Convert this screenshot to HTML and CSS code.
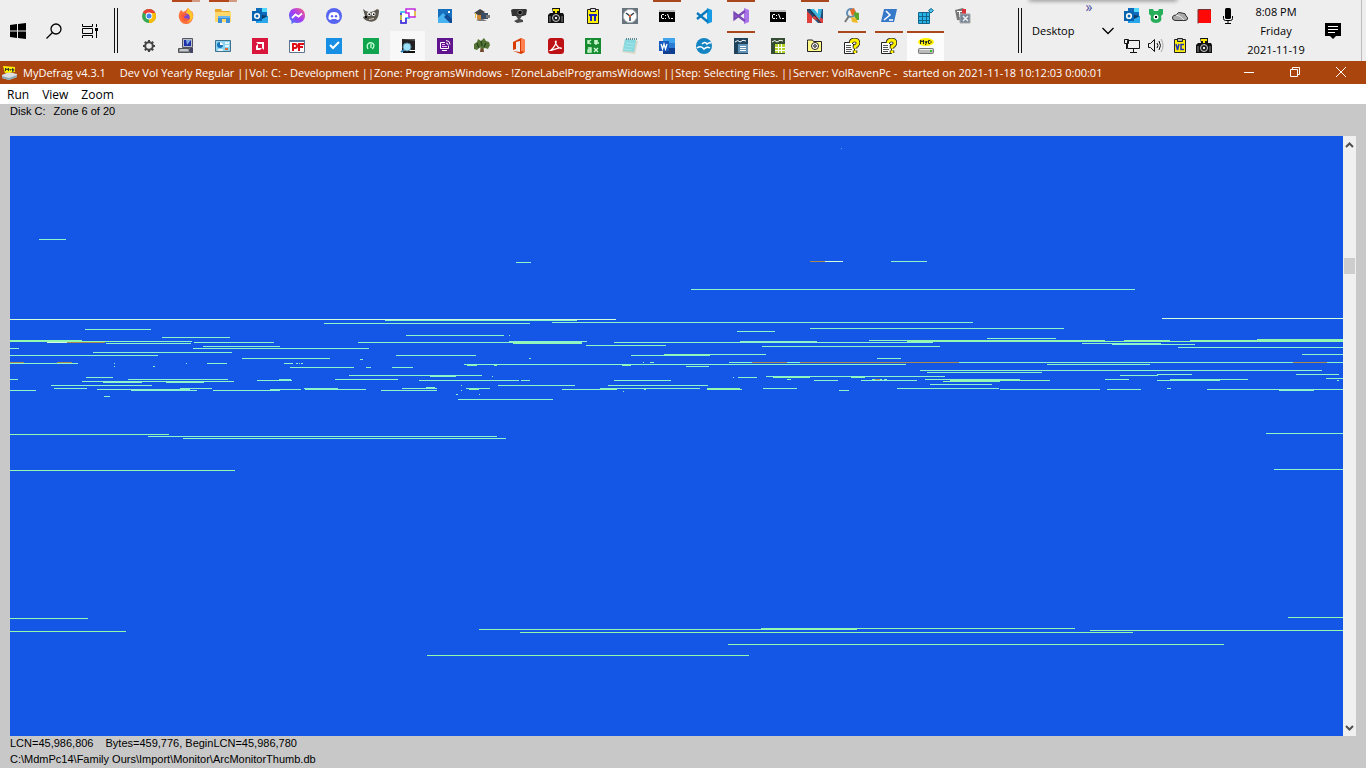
FILE: index.html
```html
<!DOCTYPE html>
<html lang="en">
<head>
<meta charset="utf-8">
<title>MyDefrag v4.3.1</title>
<link rel="stylesheet" href="styles.css">
</head>
<body>
<svg class="defs" aria-hidden="true">
  <symbol id="cmd" viewBox="0 0 16 16"><path fill="#000" d="M0 2h16v12H0z"/><path fill="#bdbdbd" d="M0 2h16v2H0z"/><path fill="none" stroke="#fff" d="M5 6.500H3L2.500 7v3l.5.500h2M6.500 7v1m0 2v1M8.500 6l2 5M12 10.500h2"/></symbol>
  <symbol id="help" viewBox="0 0 16 16"><path fill="#fff" stroke="#222" d="M.5 4.500h7l3 3v8H.5z"/><path stroke="#555" d="M2 7.500h5M2 9.500h5M2 11.500h6M2 13.500h5"/><path fill="none" stroke="#222" stroke-width="4.500" d="M7 5Q7 2 10.500 2T14 5q0 2-3 3.500v2m0 2V15"/><path fill="none" stroke="#fff200" stroke-width="2.800" d="M7 5Q7 2 10.500 2T14 5q0 2-3 3.500v2m0 2V15"/></symbol>
  <symbol id="camera" viewBox="0 0 16 16"><path fill="#111" d="M4 0h8v5h3l1 2v8H0V7l2-2h3z"/><path fill="#ffe900" d="M5 1h6v2H5zM7 3h2v2H7z"/><circle cx="8" cy="10" r="3.500" fill="#222" stroke="#ccc"/><path fill="#eee" d="M7 9h2v2H7z"/><path stroke="#888" d="M2 8v6M14 8v6"/></symbol>
  <symbol id="outlook" viewBox="0 0 16 16"><path fill="#28a8ea" d="M4 0h11v7H4z"/><path fill="#0f6cbd" d="M4 0h6v4H4zM10 4h5v4h-5z"/><path fill="#50d9ff" d="M10 0h5v4h-5z"/><path fill="#1490df" d="M4 8h12v7H4z"/><path fill="#123b6d" d="m4 8 6 4 6-4-6-1z"/><path fill="#28a8ea" d="m4 15 6-4 6-3v7z"/><path fill="#0864b1" d="M0 3h10v10H0z"/><circle cx="5" cy="8" r="2.300" fill="none" stroke="#fff" stroke-width="1.600"/></symbol>
</svg>

<header class="taskbar">
  <nav class="system" aria-label="System">
    <button class="sys" aria-label="Start"><svg viewBox="0 0 16 16"><path d="m0 2 7-1v6.500H0zm8-1 8-1v7.500H8zM0 8.500h7V15l-7-1zm8 0h8V16l-8-1z"/></svg></button>
    <button class="sys" aria-label="Search"><svg viewBox="0 0 16 16"><g fill="none" stroke="#000" stroke-width="1.300"><circle cx="10" cy="6" r="5"/><path d="m6.500 9.500-6 6"/></g></svg></button>
    <button class="sys" aria-label="Task View"><svg viewBox="0 0 16 16"><path fill="none" stroke="#000" d="M.5 1v2.500h10V1M.5 15v-2.500h10V15M.5 5.500h10v5H.5zM14.500 1v3m0 4v7"/><path d="M13 5h3v3h-3z"/></svg></button>
  </nav>
  <span class="grip"></span>
  <nav class="apps" aria-label="Applications">
    <button class="app" aria-label="Chrome"><svg viewBox="0 0 16 16"><circle cx="8" cy="8" r="7" fill="#34a853"/><path fill="#ea4335" d="M8 8 1.800 4.600A7 7 0 0 1 14.300 5z"/><path fill="#fbbc05" d="M8 8h7a7 7 0 0 1-7 7z"/><path fill="#fbbc05" d="M9 5h5.400A7 7 0 0 1 8 15l3-5z"/><circle cx="8" cy="8" r="3.400" fill="#fff"/><circle cx="8" cy="8" r="2.500" fill="#4285f4"/></svg></button>
    <button class="app open multi" aria-label="Firefox"><svg viewBox="0 0 16 16"><path fill="#ff7139" d="M10 0q2 2 3 4l1-1q2 4 1 7-2 6-7 6T1 10Q0 6 3 2l2 2q3-1 5-4z"/><path fill="#ffca28" d="M10 0q5 4 5 9-2 5-6 5 4-2 3-5-1-3-4-4z"/><circle cx="8" cy="9" r="3.600" fill="#7549d4"/><path fill="#ff5a36" d="M3 7q4-2 7 0-4 0-4 3l5 1q-4 4-7 0z"/></svg></button>
    <button class="app open multi" aria-label="File Explorer"><svg viewBox="0 0 16 16"><path fill="#e8a92d" d="M0 1h6l1 2h8v4H0z"/><path fill="#ffd76a" d="M0 4h16v10H0z"/><path fill="#3a8fd9" d="M3 8h12v7h-4v-4H7v4H3z"/><path fill="#69b5ef" d="M3 8h12v2H3z"/></svg></button>
    <button class="app" aria-label="Outlook"><svg><use href="#outlook"/></svg></button>
    <button class="app" aria-label="Messenger"><svg viewBox="0 0 16 16"><defs><linearGradient id="ms" x2="1" y1="1" y2="0"><stop stop-color="#2f7dff"/><stop offset=".5" stop-color="#a43cf5"/><stop offset="1" stop-color="#ff6478"/></linearGradient></defs><path fill="url(#ms)" d="M8 0c5 0 8 3 8 7.500S13 15 8 15l-3-.4L2.500 16v-3Q0 11 0 7.500C0 3 3 0 8 0z"/><path fill="none" stroke="#fff" stroke-width="1.800" d="m3 10 3.500-3.500 3 2L13 5.500"/></svg></button>
    <button class="app" aria-label="Discord"><svg viewBox="0 0 16 16"><circle cx="8" cy="8" r="8" fill="#5865f2"/><path fill="#fff" d="M4 5q4-2 8 0 2 3 1.500 6-2 1.500-3 .5L10 11H6l-.5 .5q-1 1-3-.5Q2 8 4 5z"/><circle cx="6" cy="8.300" r="1.200" fill="#5865f2"/><circle cx="10" cy="8.300" r="1.200" fill="#5865f2"/></svg></button>
    <button class="app" aria-label="GIMP"><svg viewBox="0 0 16 16"><path fill="#5d584f" d="M0 1q3 3 6 3 5 0 8-3l2 1q0 7-3 10-4 3-8 1-4-1-5-4l2-1z"/><circle cx="6" cy="6" r="1.900" fill="#fff"/><circle cx="10.500" cy="6" r="2" fill="#fff"/><path d="M5.500 5.500H7V7H5.500zM10 5.500h1.500V7H10zM2 8h2v2H2z"/><path stroke="#d9d4c8" d="m6 11.500 5-1"/></svg></button>
    <button class="app" aria-label="Layout tool"><svg viewBox="0 0 16 16"><path fill="#fff" stroke="#16b8ee" stroke-width="1.500" d="M1 4h8v6H6v5H1z"/><path fill="#fff" stroke="#c128e0" stroke-width="1.500" d="M6 1h9v8H9V5H6z"/><path fill="none" stroke="#5a20d8" stroke-width="1.500" d="M1 5v10h5v-5"/><path stroke="#e7dd20" stroke-width="1.500" d="M15 3v5M1 7v5"/></svg></button>
    <button class="app" aria-label="Photos"><svg viewBox="0 0 16 16"><path fill="#1670bd" d="M1 1h14v14H1z"/><path fill="#49b3f2" d="m1 10 5-5 9 9v1H1z"/><path fill="#104b96" d="m7 9 3-3 5 5v4h-2z"/><path fill="#fff" d="M11 3h2v2h-2z"/></svg></button>
    <button class="app" aria-label="Training"><svg viewBox="0 0 16 16"><path fill="#444" d="m0 5 6-4 5 3-5 4z"/><path fill="#d18a32" d="M3 7h5v5H3z"/><path fill="#3b4d66" d="M7 5h7v6H7z"/><path fill="#777" d="M12 7h4v3h-4zM2 12l7-1 4 2H5z"/><path stroke="#e8c046" d="M1.500 5v5"/></svg></button>
    <button class="app" aria-label="Webcam"><svg viewBox="0 0 16 16"><path fill="#343434" d="m0 2 2-1h13l1 1-1 5-3 1H1z"/><circle cx="9" cy="4.500" r="2.300" fill="#080808" stroke="#777"/><path fill="#4a4a4a" d="M5 8h6l-2 3 3 1v2l-6 1-3-2 4-2z"/></svg></button>
    <button class="app" aria-label="Camera"><svg><use href="#camera"/></svg></button>
    <button class="app" aria-label="Pi clipboard"><svg viewBox="0 0 16 16"><path fill="#fff20a" stroke="#222" d="M2.500 1.500h11v14h-11z"/><path fill="#ddd" stroke="#222" d="M5.500.5h5v3h-5z"/><path fill="none" stroke="#1c22bb" stroke-width="2" d="M4 7h8M6 7v6m4-6v6"/></svg></button>
    <button class="app" aria-label="Clock"><svg viewBox="0 0 16 16"><path fill="#68747d" d="M0 0h16v16H0z"/><circle cx="8" cy="8" r="6.700" fill="#fff" stroke="#aab1b6"/><path fill="none" stroke="#34404c" stroke-width="1.500" d="M4 5l4 3 4-3M8 8v5"/><path fill="#e55d22" d="M7 7h2v2H7z"/></svg></button>
    <button class="app open" aria-label="Command Prompt"><svg><use href="#cmd"/></svg></button>
    <button class="app" aria-label="Visual Studio Code"><svg viewBox="0 0 16 16"><path fill="#159ce4" d="m11 0 5 2v12l-5 2z"/><path fill="none" stroke="#0878bd" stroke-width="2.300" d="M12 2 1 11m0-6 11 9"/></svg></button>
    <button class="app open" aria-label="Visual Studio"><svg viewBox="0 0 16 16"><path fill="#a874e8" d="m11 0 5 2v12l-5 2z"/><path fill="none" stroke="#7a45b5" stroke-width="2.300" d="M12 3 1.500 11V5L12 13"/></svg></button>
    <button class="app" aria-label="Command Prompt 2"><svg><use href="#cmd"/></svg></button>
    <button class="app open" aria-label="Netbeans"><svg viewBox="0 0 16 16"><path fill="#244c76" d="M0 1h6l5 6V1h5v14h-5L5 9v6H0z"/><path fill="#e13f3d" d="M0 3l5 5v7H0zm11 5 5 3v4h-3l-6-7z"/><path fill="#35b5de" d="M3 1h4l4 5V1h4l-2 11z"/><path fill="#d94042" d="m5 10 3-3 3 4-2 1z"/><path stroke="#142a40" d="m2 1 12 14"/></svg></button>
    <button class="app" aria-label="Tools"><svg viewBox="0 0 16 16"><circle cx="7" cy="5" r="4" fill="#eee" stroke="#608db4" stroke-width="2"/><path fill="#e56b24" d="m6 2 4-2 2 5-4 3z"/><path fill="#58a72a" d="m10 4 5 1v7h-4z"/><path fill="#efba28" d="m7 9 5 1 2 5-6-1z"/><path stroke="#777" stroke-width="2" d="m5 8-4 6"/></svg></button>
    <button class="app" aria-label="PowerShell"><svg viewBox="0 0 16 16"><path fill="#3678c9" d="M3 1h13l-3 13H0z"/><path fill="none" stroke="#fff" stroke-width="1.500" d="m5 3 4 4-6 5m5 0h4"/></svg></button>
    <button class="app" aria-label="Registry Editor"><svg viewBox="0 0 16 16"><path fill="#25b3ea" stroke="#126488" d="M.5 4.500h11v11H.5z"/><path stroke="#126488" d="M4.500 4v12m4-12v12M0 8.500h12M0 12.500h12"/><path fill="#4cc8f2" stroke="#126488" d="m10.500 2.500 2.500-2 2.500 2-2.500 2.500z"/></svg></button>
    <button class="app" aria-label="Task stack"><svg viewBox="0 0 16 16"><path fill="#777" d="m0 2 8-2 2 3v10l-8-1z"/><path fill="#fff" d="M2 3h6v1H2zM4 4h1v5H4z"/><path fill="#da3038" d="M7 1h4v5H7z"/><path fill="#778596" stroke="#aaa" d="M5 6h10v9H5z"/><path stroke="#eee" stroke-width="1.500" d="m8 8 5 5m0-5-5 5"/></svg></button>

    <button class="app" aria-label="Settings"><svg viewBox="0 0 16 16"><g fill="none" stroke="#444"><circle cx="8" cy="8" r="3.800" stroke-width="2"/><path stroke-width="2" d="M8 2v2m0 8v2M2 8h2m8 0h2M3.800 3.800 5 5m6 6 1.200 1.200M3.800 12.200 5 11m6-6 1.200-1.200"/></g></svg></button>
    <button class="app" aria-label="Remote computer"><svg viewBox="0 0 16 16"><path fill="#b9bec6" stroke="#556" d="M4.500.5h10v9h-10z"/><path fill="#1c30aa" d="M6 2h7v6H6z"/><path fill="#7ca6e2" d="M8 2h5L9 7z"/><path fill="#899098" stroke="#555" d="M.5 10.500h11v4H.5z"/><path stroke="#fff" d="M2 12h8"/><path fill="#446" d="M12 10h3v5h-3z"/></svg></button>
    <button class="app" aria-label="Control Panel"><svg viewBox="0 0 16 16"><path fill="#8bd5f3" stroke="#407188" d="M.5 2.500h15v11H.5z"/><circle cx="5" cy="7" r="3" fill="#1673b9"/><path fill="#fff" d="M5 4v3h3q0-3-3-3z"/><path stroke="#fff" stroke-width="1.500" d="M10 5h4m-4 3h4M3 12h5"/><path fill="#d66a31" d="M10 10h3v2h-3z"/></svg></button>
    <button class="app" aria-label="AMD"><svg viewBox="0 0 16 16"><path fill="#d9173d" d="M0 0h16v16H0z"/><path fill="#fff" d="M4 4h8v8l-2-2V6H6zm0 4 2-2v4h4l-2 2H4z"/></svg></button>
    <button class="app" aria-label="PF"><svg viewBox="0 0 16 16"><path fill="#fff" stroke="#60748c" d="M.5 2.500h15v12H.5z"/><path fill="#54759a" d="M0 2h16v2H0z"/><path fill="none" stroke="#e00b14" stroke-width="2" d="M4 13V6h2q2 0 2 2t-2 2H4m6 3V6h5m-5 3h4"/></svg></button>
    <button class="app" aria-label="Tasks"><svg viewBox="0 0 16 16"><path fill="#168fe5" d="M0 0h16v16H0z"/><path fill="none" stroke="#fff" stroke-width="2" d="m4 7 3 3 6-6"/></svg></button>
    <button class="app" aria-label="Green audio"><svg viewBox="0 0 16 16"><path fill="#10a44e" d="M0 0h16v16H0z"/><path fill="none" stroke="#bfffd3" stroke-width="1.300" d="M5 11q-2-4 1-6 4-1 5 2 0 3-2 4M8 6v4"/></svg></button>
    <button class="app hover" aria-label="Disk search"><svg viewBox="0 0 16 16"><path fill="#222" d="M2 1h13v11H2z"/><path fill="#555" d="M2 1h13v2z"/><path fill="#111" d="M3 13h12v2H3z"/><circle cx="7" cy="9" r="4" fill="#9de1f7" stroke="#5b8ca5"/><path stroke="#267cb4" stroke-width="2" d="m4 12-3 2"/></svg></button>
    <button class="app" aria-label="Remote desktop"><svg viewBox="0 0 16 16"><path fill="#60158f" d="M0 0h16v16H0z"/><path fill="none" stroke="#fff" d="M8 4.500H3.500v6h8v-3M5 12.500h5M9 2.500q4 0 4 4M9 5q2 0 2 2"/><path stroke="#f3b5ff" d="M5 6.500h3m-3 2h5"/></svg></button>
    <button class="app" aria-label="Tree"><svg viewBox="0 0 16 16"><path fill="#6e4927" d="M7 7h2l1 7H6z"/><path fill="#547334" d="m0 6 3-2 1-3 3 2 3-3 2 3 3 1 1 3-2 4-3-1-3 1-2-2-3 3-3-1z"/><path stroke="#294a20" stroke-width="1.500" d="m3 5 2 5m2-7 1 5m4-3-2 4"/></svg></button>
    <button class="app" aria-label="Office"><svg viewBox="0 0 16 16"><path fill="#d83b01" d="m2 4 8-4 4 2v12l-4 2-8-3 7 1V3L5 4v7l-3 1z"/><path fill="#ff7f50" d="m10 0 4 2v12l-4-1z"/></svg></button>
    <button class="app" aria-label="Acrobat"><svg viewBox="0 0 16 16"><rect width="16" height="16" rx="3" fill="#bd1115"/><path fill="none" stroke="#fff" stroke-width="1.200" d="M2.500 12.500C5 11 9 5 8 3 6 3 9 10 13 10.500c2-1-4-1-10 2z"/></svg></button>
    <button class="app" aria-label="Math symbols"><svg viewBox="0 0 16 16"><path fill="#168b32" d="M0 0h16v16H0z"/><path fill="none" stroke="#d7ffd7" stroke-width="1.300" d="M3 2v4m0-2 3-2M3 4l3 2m3-3h4M9 5h5m-3-3v5M3 10h3v4H3v-2h3m3-2 4 4m0-4-4 4"/></svg></button>
    <button class="app" aria-label="Notepad"><svg viewBox="0 0 16 16"><path fill="#d8d6c6" d="m3 2 13 1-3 13-13-2z"/><path fill="#88d8df" d="m3 1 11 1-2 12-11-1z"/><path stroke="#5c8b90" stroke-dasharray="1 1" stroke-width="2" d="M4 1h11"/><path stroke="#a6e6ea" d="m4 5 8 1m-9 2 8 1m-9 2 8 1"/></svg></button>
    <button class="app" aria-label="Word"><svg viewBox="0 0 16 16"><path fill="#41a5ee" d="M4 0h12v5H4z"/><path fill="#2b7cd3" d="M4 5h12v5H4z"/><path fill="#103f91" d="M4 10h12v6H4z"/><path fill="#185abd" d="M0 3h10v10H0z"/><path fill="none" stroke="#fff" stroke-width="1.300" d="m2 6 1.500 5L5 6l1.500 5L8 6"/></svg></button>
    <button class="app" aria-label="OpenOffice"><svg viewBox="0 0 16 16"><circle cx="8" cy="8" r="8" fill="#1485c2"/><path fill="none" stroke="#fff" stroke-width="1.500" d="M6 6q3-3 5 0 2-2 4-1M1 10q4-3 7 1 3-3 6-1"/></svg></button>
    <button class="app open" aria-label="Writer"><svg viewBox="0 0 16 16"><path fill="#20435d" d="M1 0h14v16H1z"/><path fill="none" stroke="#fff" d="M2 4q3-3 5 0 3-3 6-1"/><path fill="#5f8fb5" d="M5 6h10v9H5z"/><path stroke="#fff" d="M7 8.500h6m-6 2h6m-6 2h6"/></svg></button>
    <button class="app" aria-label="Calc"><svg viewBox="0 0 16 16"><path fill="#344c32" d="M1 0h14v16H1z"/><path stroke="#fff" fill="none" d="M2 4q3-3 5 0 3-3 6-1"/><path fill="#b4d62c" d="M5 6h10v9H5z"/><path stroke="#fff" d="M8.500 6v9m3-9v9M5 9.500h10M5 12.500h10"/></svg></button>
    <button class="app" aria-label="Mail folder"><svg viewBox="0 0 16 16"><path fill="#fff98a" stroke="#222" d="M.5 3.500V2h5l1 1.500h8v10H.5z"/><circle cx="8" cy="8" r="3.500" fill="#fff" stroke="#222"/><circle cx="8" cy="8" r="1.300" fill="none" stroke="#111"/></svg></button>
    <button class="app open" aria-label="Help"><svg><use href="#help"/></svg></button>
    <button class="app open" aria-label="Help 2"><svg><use href="#help"/></svg></button>
    <button class="app active" aria-label="MyDefrag"><svg viewBox="0 0 16 16"><ellipse cx="8" cy="4" rx="8" ry="4" fill="#fff200"/><path fill="none" stroke="#222" d="M2.500 6V2l1.500 2 1.500-2v4M7 3l1 2 1-2-1.500 4M10.500 2.500v3h1.500l1-1v-1l-1-1z"/><rect x=".5" y="10.500" width="15" height="5" rx="1" fill="#bbb" stroke="#777"/><path fill="#3b3" d="M12 12h2v2h-2z"/><path stroke="#eee" d="M2 11.500h12"/></svg></button>
  </nav>
  <section class="right">
    <span class="grip"></span>
    <span class="desktop">Desktop</span>
    <button class="more" aria-label="Show more">»</button>
    <button class="expand" aria-label="Show hidden icons"><svg viewBox="0 0 12 8"><path fill="none" stroke="#000" stroke-width="1.300" d="m.5 1 5.500 5.500L11.500 1"/></svg></button>
    <div class="tray">
      <button aria-label="Outlook tray"><svg><use href="#outlook"/></svg></button>
      <button aria-label="Bear"><svg viewBox="0 0 16 16"><path fill="#27ae5a" d="M1 1h4l1 2h4l1-2h4v5l-2 2q2 7-5 7T3 8L1 6z"/><circle cx="8" cy="9" r="2.500" fill="#fff"/><path d="M7 8h2v2H7z"/></svg></button>
      <button aria-label="OneDrive"><svg viewBox="0 0 16 16"><path fill="#aaa" stroke="#333" d="M3 12.500Q0 12 .5 9 1 7 4 7q2-4 6-2 4 0 4 3 2 1 1.500 3-.5 1.500-2.500 1.500z"/><path fill="none" stroke="#eee" d="M4 7q4 0 8 5"/></svg></button>
      <button aria-label="Recording"><svg viewBox="0 0 16 16"><path fill="#ff0808" d="M2 1h13v14H2z"/><path fill="none" stroke="#733" d="M2 15.500V1.500h13"/></svg></button>
      <button aria-label="Microphone"><svg viewBox="0 0 16 16"><rect x="5" y="0" width="6" height="11" rx="1.500"/><path fill="none" stroke="#000" d="M3.500 8v2.500q0 2 2 2h5q2 0 2-2V8M8 13v3m-3-.5h6"/></svg></button>
      <button aria-label="Network"><svg viewBox="0 0 16 16"><path fill="#eee" stroke="#111" d="M3.500 2.500h12v8h-12zM.5 1.500h4v4h-4zM2.500 5v6M9.500 11v3.500M6 14.500h7"/></svg></button>
      <button aria-label="Volume"><svg viewBox="0 0 16 16"><path fill="none" stroke="#111" d="M.5 5.500h2l4-4v12l-4-4h-2zM9 5q2 2.500 0 5m2-7q3 4.500 0 9"/><path fill="none" stroke="#aaa" d="M13 1q4 6.500 0 13"/></svg></button>
      <button aria-label="VC"><svg viewBox="0 0 16 16"><path fill="#fff20a" stroke="#222" d="M2.500 1.500h11v13h-11z"/><path fill="#bbb" stroke="#222" d="M5.500.5h5v3h-5z"/><path fill="none" stroke="#2332bd" stroke-width="1.500" d="m4 6 1.500 6L7 6m5 .5H9v5h3"/></svg></button>
      <button aria-label="Camera tray"><svg><use href="#camera"/></svg></button>
    </div>
    <time class="clock" datetime="2021-11-19T20:08"><span>8:08 PM</span><span>Friday</span><span>2021-11-19</span></time>
    <button class="notify" aria-label="Notifications"><svg viewBox="0 0 16 16"><path d="M0 0h16v13h-5l-3 3-3-3H0z"/><path stroke="#fff" d="M3 3.500h10M3 6.500h10M3 9.500h7"/></svg></button>
    <button class="peek" aria-label="Show desktop"></button>
    <span class="popup"></span>
  </section>
</header>

<main class="window">
  <div class="titlebar">
    <svg class="logo" viewBox="0 0 16 14"><path fill="#ddd" d="m0 9 7-3 8 2v3l-8 3-7-2z"/><path fill="#8ba7b5" d="m0 10 7 2 8-3v2l-8 3-7-2z"/><path fill="#fff200" d="m1 0 12 1v5l-10 1z"/><path fill="none" stroke="#333" d="M3.500 5V2L5 4l1.500-2v3M8 3v1h1V3m1.500-.5v3l1.500-1v-1z"/></svg>
    <h1>MyDefrag v4.3.1</h1>
    <p class="job">Dev Vol Yearly Regular ||Vol: C: - Development ||Zone: ProgramsWindows - !ZoneLabelProgramsWidows! ||Step: Selecting Files. ||Server: VolRavenPc -&nbsp; started on 2021-11-18 10:12:03 0:00:01</p>
    <div class="controls">
      <button aria-label="Minimize"><svg viewBox="0 0 12 12"><path d="M1 6.500h10"/></svg></button>
      <button aria-label="Restore"><svg viewBox="0 0 12 12"><path d="M1.500 3.500h7v7h-7zM3.500 3V1.500h7v7H9"/></svg></button>
      <button aria-label="Close"><svg viewBox="0 0 12 12"><path d="m1 1 10 10M11 1 1 11"/></svg></button>
    </div>
  </div>
  <nav class="menu" aria-label="Menu"><button>Run</button><button>View</button><button>Zoom</button></nav>
  <p class="zone"><span>Disk C:</span><span>Zone 6 of 20</span></p>
  <section class="disk">
    <svg class="map" viewBox="10 136 1333 600" preserveAspectRatio="none" role="img" aria-label="Disk map">
      <g transform="translate(0 .5)">
      <path class="data" d="M39 239H66M516 262H531M891 261H927M691 289H1135
        M385 320H577M324 323H530M552 322H973M810 328H1064M85 329H151M737 331H775M406 335H504M509 335h1
        M162 337H230M987 338H1056M82 341H192M106 343H191M194 342H274M358 342H582M509 341H587M614 342H933M740 341H817M869 340H907M586 345H666
        M203 346H280M762 346H940M193 348H369M10 348H19M1082 343H1161M1112 344H1195M1178 347H1343
        M93 352H232M10 355H158M242 358H330M396 355H476M631 355H710M664 354H766M877 358H901M1302 354H1343M360 359H363M529 358H531
        M10 363H78M114 363h1M114 366h1M153 366h2M186 363h1M207 363H227M284 363H293M296 363h2M299 363h1M301 363H303M290 367H354M366 367H371M392 367H413
        M643 362h1M650 362H654M464 364H906M622 365H631M686 366H709M729 362H1343M1047 364H1150
        M920 370H1322M927 372H1042M1157 374H1192M1120 375H1158M1296 374H1339M349 375H482M430 376H456M492 376h1
        M733 377h1M738 377H757M766 376H945M787 379H791M1326 378H1343M1337 380h2
        M10 379H18M86 377H113M128 379H228M82 381H234M103 382H142M166 382H204M257 380H292M279 379H291M335 379H398M419 380H519M521 380H530M614 380H671
        M814 380H838M861 380H917M872 379h5M880 379h2M884 379h3M925 379H1020M943 381H1000M930 384H992M1105 379H1129M1157 380H1220M1170 379H1248
        M51 385H152M54 388H87M10 390H36M97 389H190M131 390H197M180 388H212M213 390H280M270 389H301M304 388H338M305 389H366M381 390H437M402 388H437M426 387H435
        M498 385H575M608 385H708M461 385h1M461 390h1M466 388H490M562 389H617M600 388H700M623 391h1M644 389h2M763 388H797M839 390H849M897 388H999M1000 389H1100M1107 389H1141M1167 388H1171M1207 389H1343M1279 390H1314
        M104 396H110M456 394H458M479 394h1M458 399H553
        M148 436H497M183 438H506M1266 433H1343M1274 469H1343"/>
      <path class="green" d="M10 340H82M10 341H115M907 340H1105M907 341H1343M1124 340H1170M1190 340H1343M1257 339H1343M513 342H530M513 343H582M664 354H710M467 365H477M494 365H497M622 365H630M773 377H810M851 377H865M950 380H1050M943 381H999M707 388H740M707 389H742M469 389H479M600 389H617
        M10 434H169M10 470H235M10 618H88M10 631H126M1288 617H1343M479 629H857M761 628H1075M1090 630H1343M520 632H1133M728 644H1224M427 655H749"/>
      <path class="pale" d="M10 319H616M1162 318H1343M825 261H843M47 342H67"/>
      <path class="warm" d="M810 261H825M67 342H105M10 362H24M57 362H72M752 362H787M800 362H959M1293 362H1327M875 379h5"/>
      <path class="faint" d="M841 148h1"/>
      </g>
    </svg>
    <div class="scroll">
      <button aria-label="Scroll up"><svg viewBox="0 0 9 6"><path d="M1 5l3.500-3.500L8 5"/></svg></button>
      <div class="track"><button class="thumb" aria-label="Scroll position"></button></div>
      <button aria-label="Scroll down"><svg viewBox="0 0 9 6"><path d="M1 1l3.500 3.500L8 1"/></svg></button>
    </div>
  </section>
  <footer class="status">
    <p><span>LCN=45,986,806</span><span>Bytes=459,776, BeginLCN=45,986,780</span></p>
    <p>C:\MdmPc14\Family Ours\Import\Monitor\ArcMonitorThumb.db</p>
  </footer>
</main>
</body>
</html>
```
FILE: styles.css
```css
* { box-sizing: border-box; }
body {
  margin: 0;
  height: 100vh;
  display: flex;
  flex-direction: column;
  overflow: hidden;
  background: #c8c8c8;
  color: #000;
  font-family: "Open Sans", "Noto Sans", sans-serif;
  font-size: 12px;
}
button {
  display: grid;
  place-items: center;
  margin: 0;
  padding: 0;
  border: 0;
  background: none;
  color: inherit;
  font: inherit;
}
h1, p { margin: 0; font-size: inherit; font-weight: normal; white-space: nowrap; }
.defs { position: absolute; width: 0; height: 0; }

.taskbar { display: flex; align-items: center; height: 61px; background: #eee; }
.taskbar svg { display: block; width: 16px; height: 16px; }
.system { display: flex; }
.sys { width: 36px; height: 61px; }
.grip { width: 4px; height: 45px; border: solid #111; border-width: 0 1px; }
.system + .grip { margin-left: 6px; }
.apps {
  display: grid;
  grid-template-columns: repeat(23, 37px);
  grid-template-rows: 31px 30px;
  margin-left: 12px;
}
.app { position: relative; }
.app.open::before {
  content: "";
  position: absolute;
  top: 0;
  left: 5px;
  right: 4px;
  height: 2px;
  background: #a8481c;
}
.app.multi::before { background: linear-gradient(90deg, #b5481a 70%, #d29a80 70%); }
.app.hover { background: linear-gradient(#f8f8f8, #f8f8f8) center / 35px 100% no-repeat; }
.app.active { background: #fcfcfc; box-shadow: inset 0 2px #a8481c; }
.right { position: relative; display: flex; align-items: center; height: 61px; margin-left: auto; }
.desktop { margin-left: 10px; width: 51px; font-size: 11px; }
.more { align-self: flex-start; width: 12px; height: 14px; color: #4c4c9c; font-size: 14px; line-height: 14px; }
.expand { margin-left: 7px; width: 12px; height: 61px; }
.taskbar .expand svg { width: 12px; height: 8px; }
.tray {
  display: grid;
  grid-template-columns: repeat(5, 24px);
  grid-template-rows: 31px 30px;
  margin-left: 6px;
}
.clock { display: grid; width: 72px; text-align: center; line-height: 19px; font-size: 11px; }
.notify { width: 42px; height: 61px; }
.peek { width: 5px; height: 61px; margin-left: 7px; border-left: 1px solid #bbb; }
.popup { position: absolute; top: -4px; left: 11px; width: 148px; height: 4px; box-shadow: 0 1px 4px #888; }

.window { flex: 1; min-height: 0; display: flex; flex-direction: column; }
.titlebar { display: flex; align-items: center; height: 23px; padding: 0 2px; background: #ab450e; color: #fff; font-size: 11px; }
.logo { width: 16px; height: 14px; margin-right: 5px; }
.job { margin-left: 14px; }
.controls { display: flex; margin-left: auto; }
.controls button { width: 46px; height: 23px; padding-bottom: 2px; }
.controls svg { width: 12px; height: 12px; fill: none; stroke: #fff; }
.menu { display: flex; gap: 13px; height: 20px; padding-left: 7px; background: #fff; font-size: 12px; }

.zone, .status { font-family: "Liberation Sans", Arial, sans-serif; font-size: 11px; }
.zone { display: flex; gap: 8px; height: 32px; padding-left: 10px; line-height: 14px; }
.disk { flex: 1; min-height: 0; display: flex; margin: 0 10px; }
.map { flex: 1; min-width: 0; height: 100%; background: #1457e6; fill: none; shape-rendering: crispEdges; }
.data { stroke: #8cf5cc; }
.green { stroke: #94f8b0; }
.pale { stroke: #d4ffdc; }
.warm { stroke: #a88a50; }
.faint { stroke: #6c9cf0; }
.scroll { display: flex; flex-direction: column; width: 13px; background: #f0f0f0; }
.scroll button { height: 17px; }
.scroll svg { width: 9px; height: 6px; fill: none; stroke: #505050; stroke-width: 2; }
.track { flex: 1; display: flex; flex-direction: column; }
.track::before { content: ""; flex: 105; }
.track::after { content: ""; flex: 445; }
.scroll .thumb { width: 11px; height: 16px; margin-left: 1px; background: #cdcdcd; }
.status { height: 32px; padding-left: 10px; }
.status p { display: flex; gap: 12px; height: 16px; line-height: 15px; }
```
